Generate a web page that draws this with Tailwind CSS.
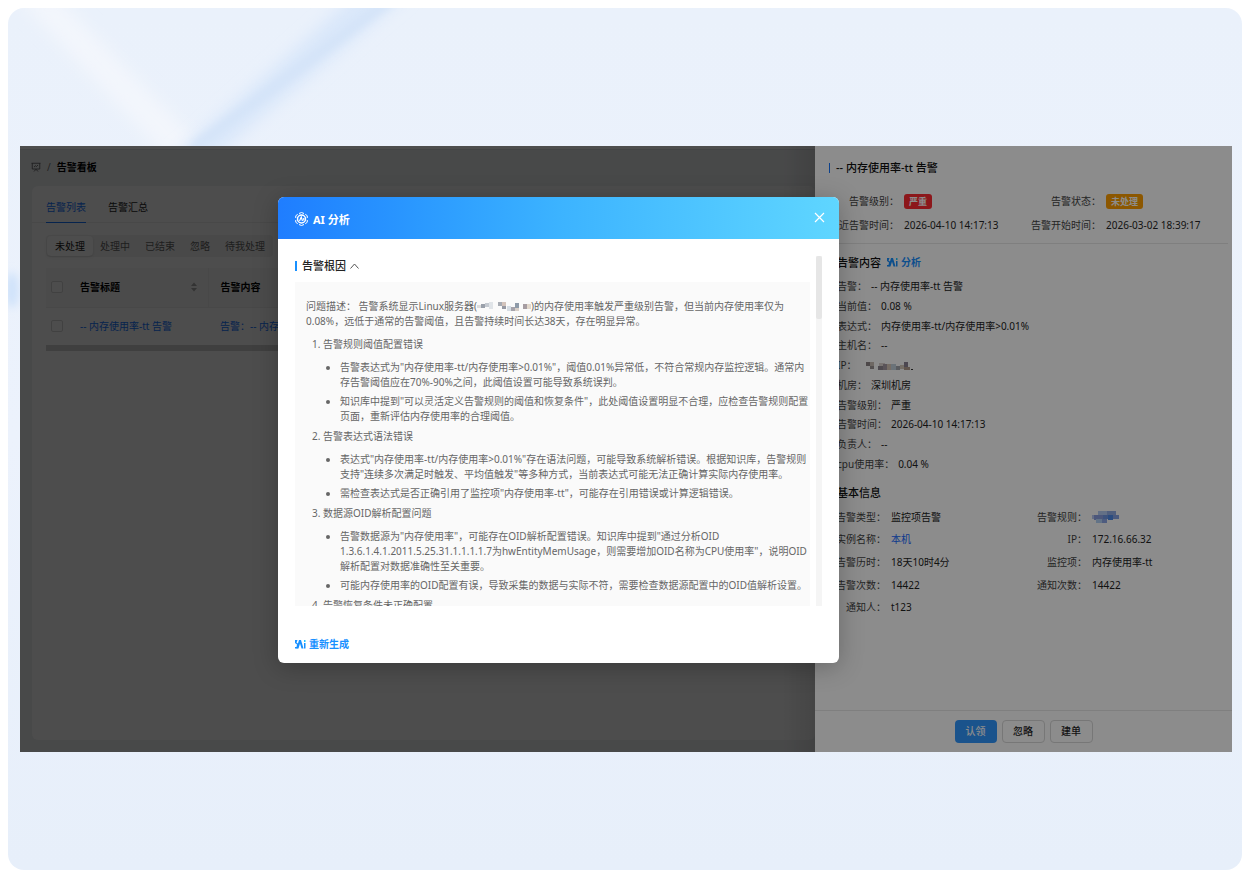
<!DOCTYPE html>
<html lang="zh-CN">
<head>
<meta charset="utf-8">
<meta name="viewport" content="width=device-width, initial-scale=1">
<title>告警看板</title>
<script src="https://cdn.jsdelivr.net/npm/@tailwindcss/browser@4"></script>
</head>
<body class="flex min-h-screen bg-white p-2 font-['Noto_Sans','Noto_Sans_CJK_SC',sans-serif] text-[10px] leading-[15px] text-[#262626]">
<div class="relative flex min-w-0 flex-1 flex-col overflow-hidden rounded-2xl bg-linear-to-b from-[#eaf1fb] via-[#ecf2fc] to-[#e7effa] pt-[138px] pr-[10px] pb-[118px] pl-3">
  <!-- soft light streaks behind the app -->
  <svg class="absolute top-0 left-0" width="480" height="340" viewBox="0 0 480 340" fill="none" aria-hidden="true">
    <defs>
      <filter id="soft" x="-30%" y="-30%" width="160%" height="160%"><feGaussianBlur stdDeviation="8"/></filter>
      <filter id="soft2" x="-30%" y="-30%" width="160%" height="160%"><feGaussianBlur stdDeviation="4"/></filter>
    </defs>
    <path d="M10 -10L50 -10L200 145L160 150Z" fill="#f3f6fc" filter="url(#soft)"/>
    <path d="M350 -15L400 -15L205 150L165 150Z" fill="#d9e7fa" filter="url(#soft)"/>
    <path d="M385 -10L185 140" stroke="#d3e3f8" stroke-width="8" filter="url(#soft2)"/>
    <ellipse cx="4" cy="282" rx="7" ry="18" fill="#cfe2fa" filter="url(#soft2)"/>
  </svg>

  <div class="relative flex flex-1 overflow-hidden bg-[#f0f2f5]">
    <!-- board -->
    <main class="relative flex min-w-0 flex-1 flex-col overflow-hidden">
      <div class="h-1 border-b border-[#e0e2e5] bg-white"></div>
      <nav class="flex h-9 items-center gap-[6px] pb-[2px] pl-[11px] text-[#555]">
        <svg width="10" height="10" viewBox="0 0 20 20" fill="none" stroke="currentColor" stroke-width="1.6" aria-hidden="true"><path d="M1 2.5H19M2.5 2.5V14H17.5V2.5M6 19L10 14.500L14 19M6 10L9 7.500L11 9L14 6"/></svg>
        <span class="text-[#777]">/</span>
        <strong class="font-bold text-black">告警看板</strong>
      </nav>
      <section class="ml-3 mb-3 flex flex-1 flex-col rounded-md bg-white">
        <div class="flex h-[37px] gap-[22px] border-b border-[#eee] pt-[13px] pl-[14px]">
          <button class="h-6 border-b border-[#1677ff] pb-[7px] text-[#1677ff]">告警列表</button>
          <button class="h-6 pb-[7px]">告警汇总</button>
        </div>
        <div class="mt-3 ml-[14px] flex h-[22px] w-[227px] items-center rounded bg-[#f3f3f3] p-px whitespace-nowrap text-[#666]">
          <button class="h-5 rounded bg-white px-2 text-[#222] shadow-sm">未处理</button>
          <button class="px-[7px]">处理中</button>
          <button class="px-2">已结束</button>
          <button class="px-[7px]">忽略</button>
          <button class="px-2">待我处理</button>
        </div>
        <table class="mt-[11px] ml-[14px] w-[800px] table-fixed text-left">
          <colgroup><col class="w-[34px]"><col class="w-[128px]"><col></colgroup>
          <thead>
            <tr class="h-[39px] border-b border-[#f0f0f0] bg-[#fafafa] text-black">
              <th class="pl-[5px]"><input type="checkbox" aria-label="全选" class="block size-3 appearance-none rounded-[2px] border border-[#d9d9d9] bg-white"></th>
              <th class="border-r border-[#f0f0f0] pr-[11px] font-bold"><span class="flex items-center justify-between">告警标题<svg width="6" height="10" viewBox="0 0 6 10" fill="#aaa" aria-hidden="true"><path d="M3 0.500L6 4H0ZM3 9.500L6 6H0Z"/></svg></span></th>
              <th class="pl-3 font-bold">告警内容</th>
            </tr>
          </thead>
          <tbody>
            <tr class="h-[38px] whitespace-nowrap text-[#1677ff]">
              <td class="pl-[5px]"><input type="checkbox" aria-label="选择告警" class="block size-3 appearance-none rounded-[2px] border border-[#d9d9d9] bg-white"></td>
              <td><a href="#">-- 内存使用率-tt 告警</a></td>
              <td class="pl-3"><a href="#">告警：-- 内存</a></td>
            </tr>
          </tbody>
        </table>
        <div class="ml-[14px] h-[6px] bg-[#d4d4d4]"></div>
      </section>
      <div class="absolute inset-0 bg-black/45"></div>
      <div class="absolute inset-y-0 right-0 w-8 bg-linear-to-r from-transparent to-black/10"></div>
    </main>

    <!-- detail drawer -->
    <aside class="flex w-[417px] shrink-0 flex-col bg-white">
      <div class="flex h-[43px] items-center pl-[14px] text-[11px] font-medium text-[#111]">
        <span class="mr-[6px] h-[10px] w-px bg-[#1677ff]"></span>
        <h2>-- 内存使用率-tt 告警</h2>
      </div>
      <dl class="mr-1 grid h-[55px] grid-cols-[84px_112px_80px_1fr] items-center gap-x-[5px] border-b border-[#e8e8e8] whitespace-nowrap pb-[5px]">
        <dt class="justify-self-end text-[#444]">告警级别：</dt>
        <dd><span class="inline-block rounded-[3px] bg-[#ff2a32] px-[5px] text-[9px] font-bold text-white">严重</span></dd>
        <dt class="justify-self-end text-[#444]">告警状态：</dt>
        <dd><span class="inline-block rounded-[3px] bg-[#ff9f00] px-[5px] text-[9px] font-bold text-white">未处理</span></dd>
        <dt class="justify-self-end text-[#444]">最近告警时间：</dt>
        <dd>2026-04-10 14:17:13</dd>
        <dt class="justify-self-end text-[#444]">告警开始时间：</dt>
        <dd>2026-03-02 18:39:17</dd>
      </dl>
      <div class="flex h-[33px] items-center pt-[3px] pl-[22px]">
        <h3 class="text-[11px] font-medium text-[#111]">告警内容</h3>
        <a href="#" class="ml-[6px] flex items-center gap-[3px] font-bold text-[#1890ff]">
          <svg width="11" height="9" viewBox="0 0 22 18" fill="currentColor" aria-hidden="true"><path d="M0 0H5L3 5L7 8L5 17H0V14H3L4 9L0 6Z"/><path d="M8 0H12L17 17H13L10 7L7 17H3Z"/><path d="M18 6H21V17H18Z"/><path d="M18 0H21V4H18Z" fill="#22c6ff"/></svg>分析</a>
      </div>
      <dl class="flex h-[197px] flex-col pl-[22px] text-[#222] *:flex *:flex-1 *:items-center *:gap-1">
        <div><dt class="text-[#444]">告警：</dt><dd>-- 内存使用率-tt 告警</dd></div>
        <div><dt class="text-[#444]">当前值：</dt><dd>0.08 %</dd></div>
        <div><dt class="text-[#444]">表达式：</dt><dd>内存使用率-tt/内存使用率&gt;0.01%</dd></div>
        <div><dt class="text-[#444]">主机名：</dt><dd>--</dd></div>
        <div><dt class="w-[25px] text-[#444]">IP：</dt><dd>
          <svg width="48" height="10" viewBox="0 0 48 10" role="img" aria-label="已遮挡"><path d="M0 1h4v4H0z" fill="#8c8486"/><path d="M4 1h4v4H4z" fill="#c9bdb4"/><path d="M4 5h4v3H4z" fill="#9a9293"/><path d="M12 5h5v4h-5z" fill="#8f8890"/><path d="M13 2h6v3h-6z" fill="#ddd4d0"/><path d="M17 3h4v6h-4z" fill="#a49aa2"/><path d="M21 3h4v6h-4z" fill="#d8c6b8"/><path d="M25 3h5v6h-5z" fill="#c4d2dc"/><path d="M30 5h4v4h-4z" fill="#a3a6ad"/><path d="M34 4h4v4h-4z" fill="#d5c9ba"/><path d="M38 1h4v5h-4z" fill="#8b8192"/><path d="M38 6h6v3h-6z" fill="#b19b8c"/><path d="M45 8h2v1h-2z" fill="#333"/></svg></dd></div>
        <div><dt class="text-[#444]">机房：</dt><dd>深圳机房</dd></div>
        <div><dt class="text-[#444]">告警级别：</dt><dd>严重</dd></div>
        <div><dt class="text-[#444]">告警时间：</dt><dd>2026-04-10 14:17:13</dd></div>
        <div><dt class="text-[#444]">负责人：</dt><dd>--</dd></div>
        <div><dt class="text-[#444]">cpu使用率：</dt><dd>0.04 %</dd></div>
      </dl>
      <h3 class="flex h-8 items-center pt-1 pl-[22px] text-[11px] font-medium text-[#111]">基本信息</h3>
      <dl class="grid h-[113px] auto-rows-fr grid-cols-[71px_126px_65px_1fr] items-center gap-x-[5px] whitespace-nowrap text-[#222]">
        <dt class="justify-self-end text-[#444]">告警类型：</dt><dd>监控项告警</dd>
        <dt class="justify-self-end text-[#444]">告警规则：</dt><dd><svg width="28" height="13" viewBox="0 0 28 13" role="img" aria-label="已遮挡"><path d="M6 0h9v4H6z" fill="#b4ccf5"/><path d="M15 0h9v4h-9z" fill="#92aee6"/><path d="M0 4h4v4H0z" fill="#b8c8f0"/><path d="M2 4h9v5H2z" fill="#8a9fe0"/><path d="M11 4h5v4h-5z" fill="#6f97e4"/><path d="M16 4h5v5h-5z" fill="#4f8be8"/><path d="M21 4h6v4h-6z" fill="#88a4e6"/><path d="M4 8h6v4H4z" fill="#b3d2f6"/><path d="M10 8h5v4h-5z" fill="#8ea8e8"/></svg></dd>
        <dt class="justify-self-end text-[#444]">实例名称：</dt><dd><a href="#" class="text-[#1668ff]">本机</a></dd>
        <dt class="justify-self-end text-[#444]">IP：</dt><dd>172.16.66.32</dd>
        <dt class="justify-self-end text-[#444]">告警历时：</dt><dd>18天10时4分</dd>
        <dt class="justify-self-end text-[#444]">监控项：</dt><dd>内存使用率-tt</dd>
        <dt class="justify-self-end text-[#444]">告警次数：</dt><dd>14422</dd>
        <dt class="justify-self-end text-[#444]">通知次数：</dt><dd>14422</dd>
        <dt class="justify-self-end text-[#444]">通知人：</dt><dd>t123</dd>
      </dl>
      <footer class="mt-auto flex h-[42px] justify-center gap-[5px] border-t border-[#e8e8e8] pt-[9px]">
        <button class="h-[23px] w-[42px] rounded bg-[#3097ff] font-medium text-white">认领</button>
        <button class="h-[23px] w-[43px] rounded border border-[#d9d9d9] bg-white font-medium">忽略</button>
        <button class="h-[23px] w-[43px] rounded border border-[#d9d9d9] bg-white font-medium">建单</button>
      </footer>
    </aside>

    <div class="absolute inset-0 bg-black/45"></div>

    <!-- analysis dialog -->
    <section role="dialog" aria-labelledby="dlg-title" class="absolute top-[51px] left-[258px] flex w-[561px] flex-col overflow-hidden rounded-md bg-white shadow-[0_4px_24px_rgba(0,0,0,0.25)]">
      <header class="flex h-[42px] items-center bg-linear-to-r from-[#1f7dff] via-[#3cb3ff] to-[#5fd6ff] pr-[14px] pl-[17px] text-white">
        <svg class="mt-[2px]" width="13" height="14" viewBox="0 0 26 28" fill="none" stroke="currentColor" aria-hidden="true"><path stroke-width="2" d="M8 3L13 1L18 3M20.500 4.500L24.500 7.500V12M24.500 16V20.500L20.500 23.500M18 25L13 27L8 25M5.500 23.500L1.500 20.500V16M1.500 12V7.500L5.500 4.500"/><circle cx="13" cy="14" r="8" stroke-width="3"/><path stroke-width="2.400" d="M9 18L12.500 10L15 18M17.500 12V17"/></svg>
        <h2 id="dlg-title" class="mt-[2px] ml-[5px] flex-1 text-[11px] font-bold">AI 分析</h2>
        <button aria-label="关闭" class="mb-[2px]"><svg width="11" height="11" viewBox="0 0 11 11" stroke="currentColor" stroke-width="1.200" aria-hidden="true"><path d="M1 1L10 10M10 1L1 10"/></svg></button>
      </header>
      <div class="mt-[17px] mr-[17px] ml-[17px] flex h-[350px] gap-[6px]">
        <div class="min-w-0 flex-1 overflow-hidden">
          <div class="flex h-[26px] items-center pb-[7px]">
            <span class="mr-[5px] h-[10px] w-[2px] bg-[#1890ff]"></span>
            <h3 class="text-[11px] font-medium text-[#222]">告警根因</h3>
            <svg class="ml-[4px]" width="9" height="6" viewBox="0 0 9 6" fill="none" stroke="#555" aria-hidden="true"><path d="M0.500 5.500L4.500 1L8.500 5.500"/></svg>
          </div>
          <div class="bg-[#fafafa] pt-[17px] pl-[11px] text-[#666]">
            <p class="whitespace-nowrap">问题描述： 告警系统显示Linux服务器(<svg class="inline-block align-[-2px]" width="54" height="11" viewBox="0 0 54 11" role="img" aria-label="已遮挡"><path d="M0 4h4v3H0z" fill="#dcdcdc"/><path d="M4 3h4v4H4z" fill="#9aa0aa"/><path d="M8 2h4v4H8z" fill="#c4c9d0"/><path d="M12 1h4v7h-4z" fill="#e0e4e8"/><path d="M21 1h4v4h-4z" fill="#a7abb3"/><path d="M25 1h4v4h-4z" fill="#d3c3bb"/><path d="M25 5h4v3h-4z" fill="#9699a3"/><path d="M30 5h4v5h-4z" fill="#d6dde4"/><path d="M34 6h4v4h-4z" fill="#a5a3ab"/><path d="M38 2h4v5h-4z" fill="#8f9ba9"/><path d="M38 7h4v3h-4z" fill="#d8cfc8"/><path d="M46 3h4v5h-4z" fill="#a69da2"/><path d="M50 3h4v5h-4z" fill="#e2d8cc"/></svg>)的内存使用率触发严重级别告警，但当前内存使用率仅为<br>0.08%，远低于通常的告警阈值，且告警持续时间长达38天，存在明显异常。</p>
            <ol class="mt-2 flex list-decimal flex-col gap-[5px] pl-[17px]">
              <li>告警规则阈值配置错误
                <ul class="mt-2 flex list-disc flex-col gap-1 pl-[17px]">
                  <li>告警表达式为"内存使用率-tt/内存使用率&gt;0.01%"，阈值0.01%异常低，不符合常规内存监控逻辑。通常内<br>存告警阈值应在70%-90%之间，此阈值设置可能导致系统误判。</li>
                  <li>知识库中提到"可以灵活定义告警规则的阈值和恢复条件"，此处阈值设置明显不合理，应检查告警规则配置<br>页面，重新评估内存使用率的合理阈值。</li>
                </ul>
              </li>
              <li>告警表达式语法错误
                <ul class="mt-2 flex list-disc flex-col gap-1 pl-[17px]">
                  <li>表达式"内存使用率-tt/内存使用率&gt;0.01%"存在语法问题，可能导致系统解析错误。根据知识库，告警规则<br>支持"连续多次满足时触发、平均值触发"等多种方式，当前表达式可能无法正确计算实际内存使用率。</li>
                  <li>需检查表达式是否正确引用了监控项"内存使用率-tt"，可能存在引用错误或计算逻辑错误。</li>
                </ul>
              </li>
              <li>数据源OID解析配置问题
                <ul class="mt-2 flex list-disc flex-col gap-1 pl-[17px]">
                  <li>告警数据源为"内存使用率"，可能存在OID解析配置错误。知识库中提到"通过分析OID<br>1.3.6.1.4.1.2011.5.25.31.1.1.1.1.7为hwEntityMemUsage，则需要增加OID名称为CPU使用率"，说明OID解析配置对数据准确性至关重要。</li>
                  <li>可能内存使用率的OID配置有误，导致采集的数据与实际不符，需要检查数据源配置中的OID值解析设置。</li>
                </ul>
              </li>
              <li>告警恢复条件未正确配置</li>
            </ol>
          </div>
        </div>
        <div class="w-[6px] bg-[#f5f5f5]"><div class="h-[63px] rounded-[2px] bg-[#e6e6e6]"></div></div>
      </div>
      <footer class="flex h-[57px] items-center pt-[19px] pl-[17px]">
        <button class="flex items-center gap-[3px] font-bold text-[#1890ff]">
          <svg width="11" height="9" viewBox="0 0 22 18" fill="currentColor" aria-hidden="true"><path d="M0 0H5L3 5L7 8L5 17H0V14H3L4 9L0 6Z"/><path d="M8 0H12L17 17H13L10 7L7 17H3Z"/><path d="M18 6H21V17H18Z"/><path d="M18 0H21V4H18Z" fill="#22c6ff"/></svg>重新生成</button>
      </footer>
    </section>
  </div>
</div>
</body>
</html>
